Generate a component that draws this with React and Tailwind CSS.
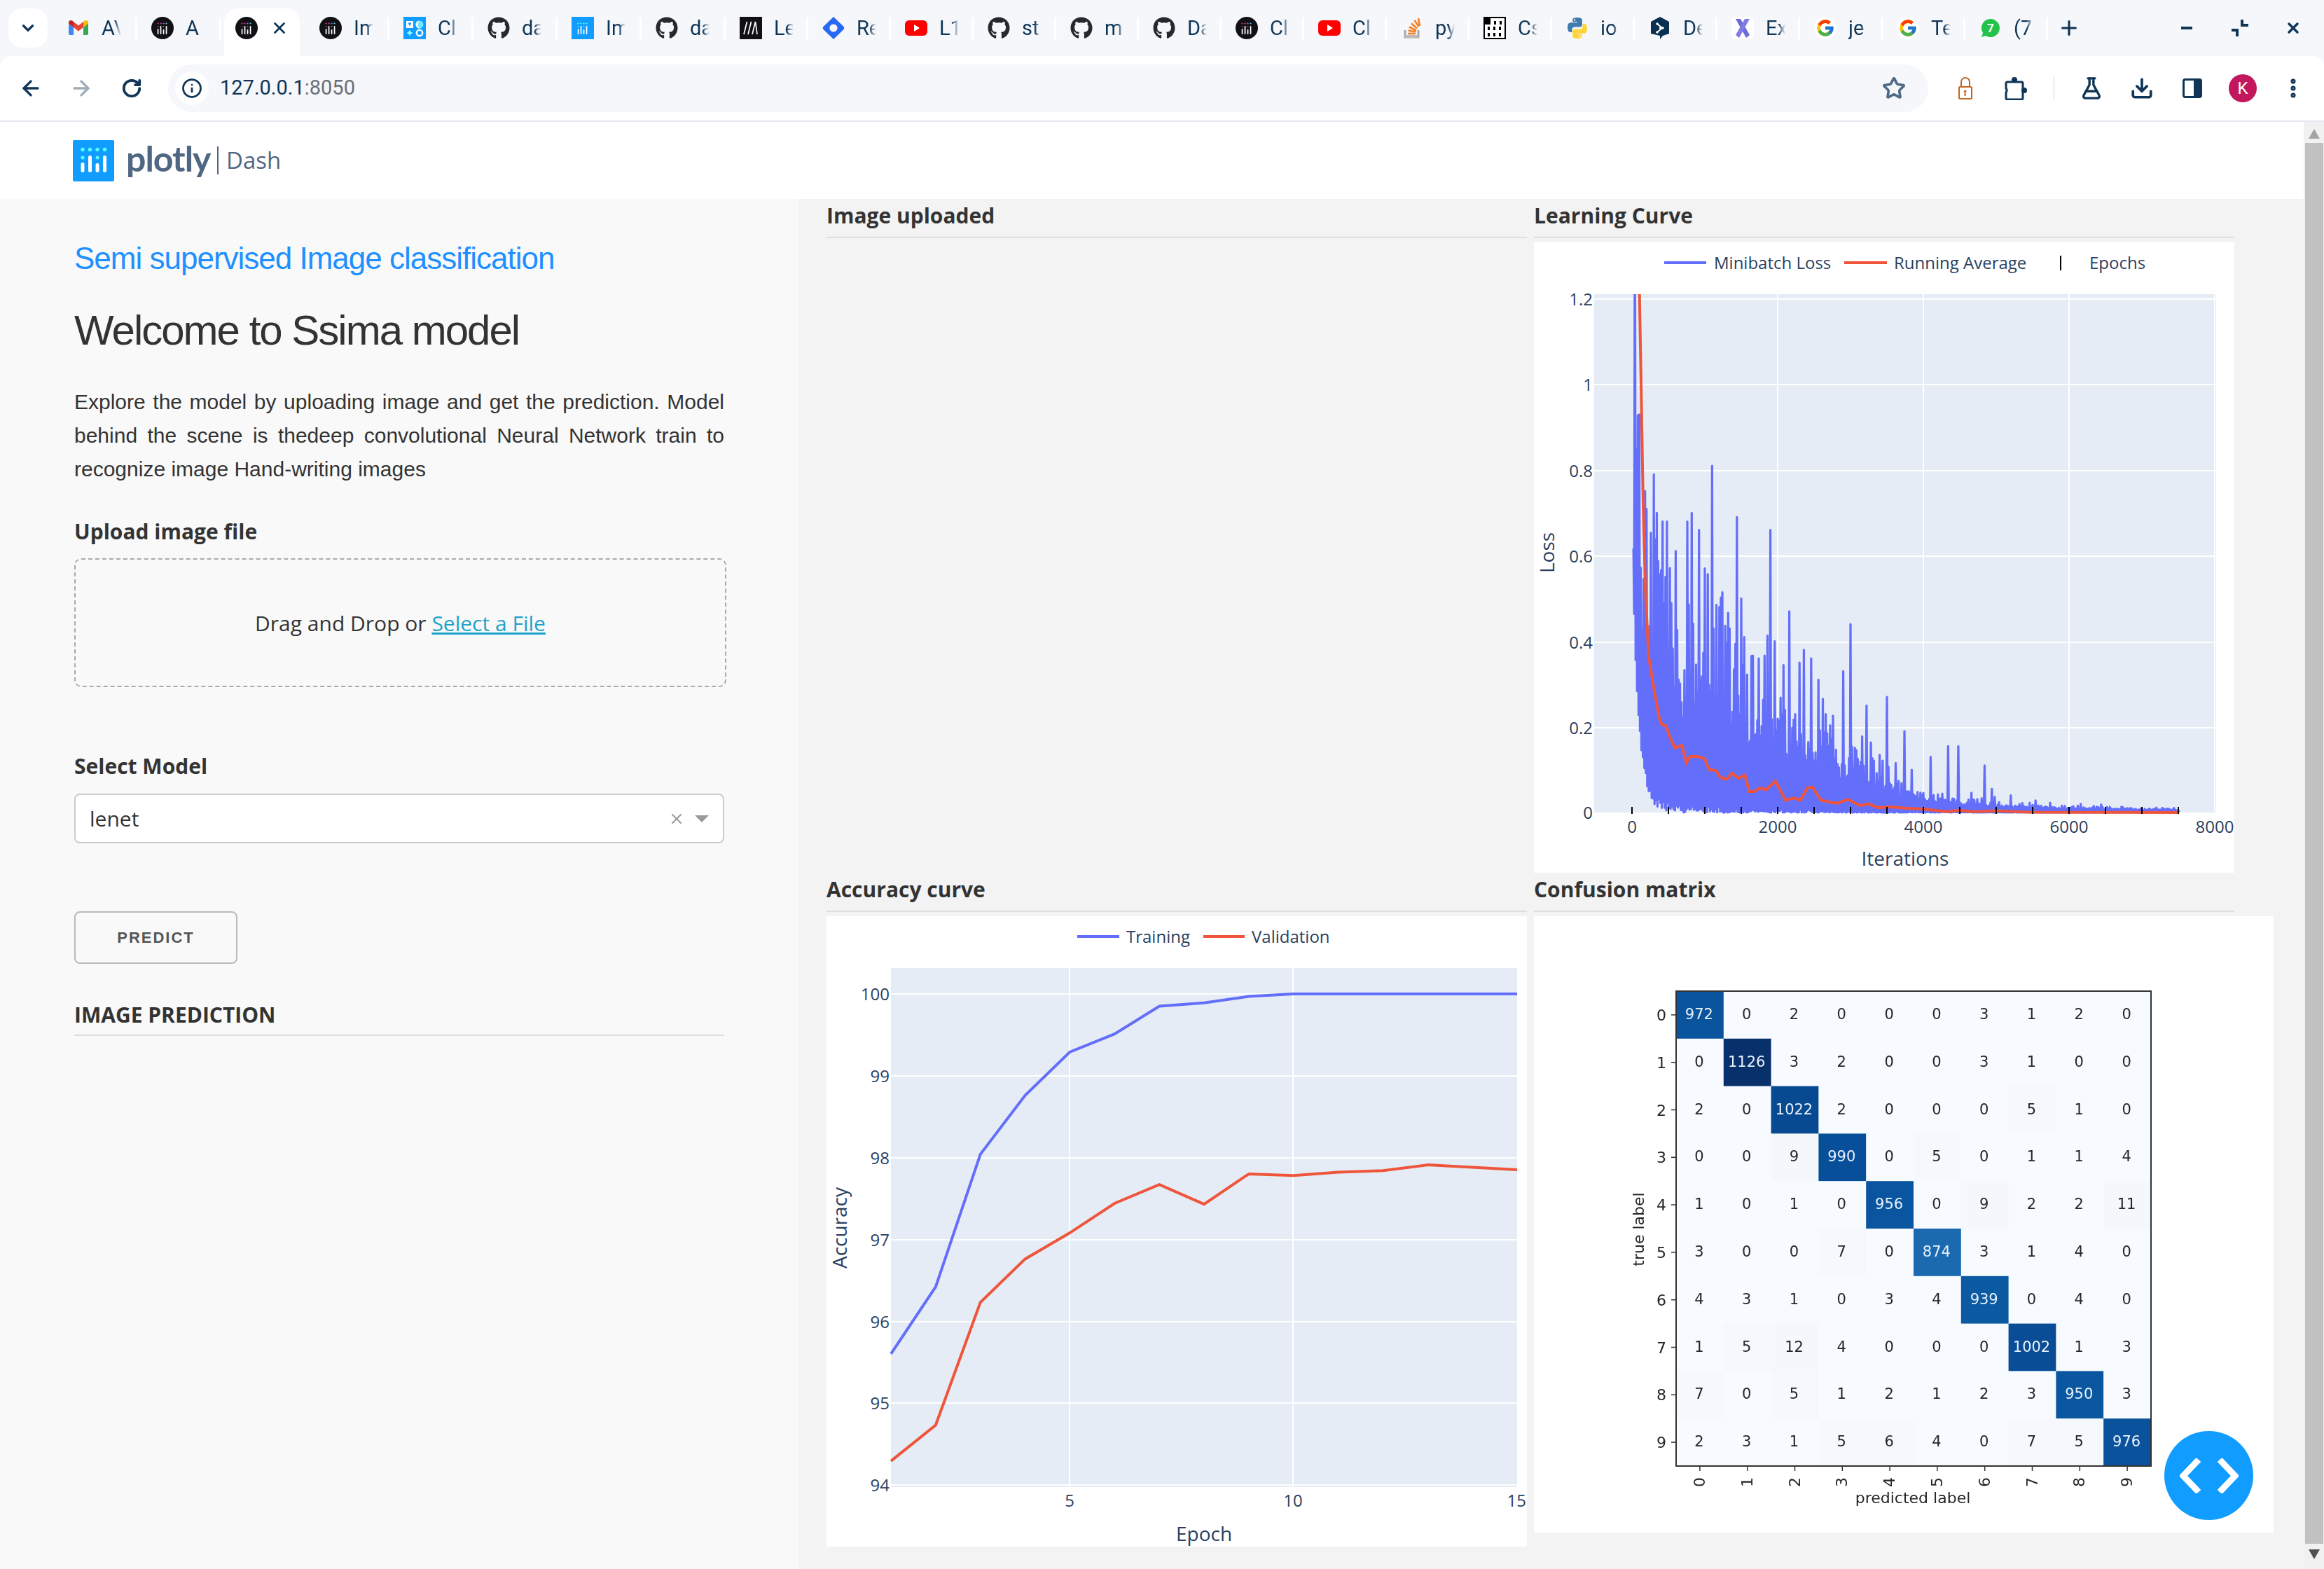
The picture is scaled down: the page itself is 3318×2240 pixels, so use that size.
import React from "react";
import { ArrowLeft, ArrowRight, RotateCw, Info, ChevronDown, X, Plus, Star, FlaskConical, Download, EllipsisVertical } from "lucide-react";
import { FaGithub } from "react-icons/fa";
import { FcGoogle } from "react-icons/fc";

const Gmail = () => (
  <svg viewBox="0 0 32 32" className="w-[32px] h-[32px]">
    <path d="M2 9v15a2 2 0 0 0 2 2h5V15z" fill="#4285f4" />
    <path d="M30 9v15a2 2 0 0 1-2 2h-5V15z" fill="#34a853" />
    <path d="M9 15V7l7 5.5L23 7v8l-7 5.5z" fill="#ea4335" />
    <path d="M2 9.5V8c0-2.5 3-4 5-2.5L9 7v8z" fill="#c5221f" />
    <path d="M30 9.5V8c0-2.5-3-4-5-2.5L23 7v8z" fill="#fbbc04" />
  </svg>
);
const DashBars = ({ dots, x = 0 }) => (
  <g>
    {[9.5, 13.5, 17.5, 21.5].map((c, i) => (
      <circle key={i} cx={c + x} cy="9.5" r="1.1" fill={dots[i]} />
    ))}
    <rect x="8.7" y="17" width="1.7" height="8" rx=".8" fill="#fff" />
    <rect x="8.7" y="13" width="1.7" height="1.7" rx=".8" fill={dots[0]} />
    <rect x="12.7" y="13" width="1.7" height="12" rx=".8" fill="#fff" />
    <rect x="16.7" y="18" width="1.7" height="7" rx=".8" fill="#fff" />
    <rect x="16.7" y="13" width="1.7" height="1.7" rx=".8" fill={dots[2]} />
    <rect x="20.7" y="13" width="1.7" height="12" rx=".8" fill="#fff" />
  </g>
);
const DashIcon = () => (
  <svg viewBox="0 0 32 32" className="w-[32px] h-[32px]">
    <circle cx="16" cy="16" r="16" fill="#111115" />
    <DashBars dots={["#e6336f", "#c04a9a", "#8a7fd0", "#5cc8e8"]} />
  </svg>
);
const PlotlySquare = () => (
  <svg viewBox="0 0 32 32" className="w-[32px] h-[32px]">
    <rect width="32" height="32" fill="#119dff" />
    <DashBars dots={["#5ff", "#5ff", "#5ff", "#5ff"]} />
  </svg>
);
const ChartIcon = () => (
  <svg viewBox="0 0 32 32" className="w-[32px] h-[32px]">
    <rect width="32" height="32" fill="#119dff" />
    <rect x="4" y="6" width="10" height="10" fill="#fff" />
    <path d="M6.5 8.5h5L9 13.5z" fill="#119dff" />
    <circle cx="23" cy="11" r="5.5" fill="#6fe8ff" />
    <path d="M23 5.5a5.5 5.5 0 0 0 0 11 7 7 0 0 1 0-11" fill="#fff" />
    <path d="M9 18.5l1.5 3 3 1.5-3 1.5-1.5 3-1.5-3-3-1.5 3-1.5z" fill="#8ff" />
    <circle cx="23" cy="23" r="4.2" fill="none" stroke="#fff" strokeWidth="2.4" />
  </svg>
);
const MIcon = () => (
  <svg viewBox="0 0 32 32" className="w-[32px] h-[32px]">
    <rect width="32" height="32" fill="#111115" />
    <path d="M6 25L10.500 7M12 25L16.500 7M18 25L22.500 7L25 25" fill="none" stroke="#fff" strokeWidth="1.7" />
  </svg>
);
const DiamondIcon = () => (
  <svg viewBox="0 0 32 32" className="w-[32px] h-[32px]">
    <path d="M16 0l14 13.500a3.500 3.500 0 0 1 0 5L16 32 2 18.500a3.500 3.500 0 0 1 0-5z" fill="#2768f5" />
    <circle cx="16" cy="16" r="5.6" fill="#f5f7fb" />
  </svg>
);
const YouTube = () => (
  <svg viewBox="0 0 32 32" className="w-[32px] h-[32px]">
    <rect x="0" y="5" width="32" height="22" rx="6" fill="#ff0000" />
    <path d="M13 11l8 5-8 5z" fill="#fff" />
  </svg>
);
const StackOverflow = () => (
  <svg viewBox="0 0 32 32" className="w-[32px] h-[32px]">
    <path d="M6 19v10h19V19" fill="none" stroke="#a9a9ab" strokeWidth="3" />
    <rect x="6" y="26" width="19" height="4" fill="#bcbbbb" />
    <path d="M10 24h11" stroke="#f48024" strokeWidth="2.6" />
    <path d="M10.500 19.500l11 2M12 14.500l10 5M15 9.500l8 7M19.500 5l6 9M25 2l2 11" stroke="#f48024" strokeWidth="2.6" fill="none" />
  </svg>
);
const Building = () => (
  <svg viewBox="0 0 32 32" className="w-[32px] h-[32px]">
    <rect width="32" height="32" fill="#000" />
    <path d="M10 2h20v28H2V11h8z" fill="#fff" />
    {[15, 23].map((x) => <rect key={x} x={x} y="6" width="3" height="5" />)}
    {[6, 14, 22].map((x) => <rect key={x} x={x} y="14" width="3" height="5" />)}
    {[6, 14, 22].map((x) => <rect key={x} x={x} y="23" width="3" height="5" />)}
  </svg>
);
const PythonIcon = () => {
  const d = "M15.900 1c-7 0-6.600 3-6.600 3v3.200h6.800v1H6.600S2 7.700 2 15s4 6.900 4 6.900h2.400v-3.300s-.1-4 3.900-4h6.800s3.800.1 3.800-3.700V4.800S23.500 1 15.900 1zm-3.800 2.200a1.200 1.200 0 1 1 0 2.400 1.200 1.200 0 0 1 0-2.400z";
  return (
    <svg viewBox="0 0 32 32" className="w-[32px] h-[32px]">
      <path d={d} fill="#3f7cad" />
      <path d={d} fill="#ffd43b" transform="rotate(180 16 16)" />
    </svg>
  );
};
const HexIcon = () => (
  <svg viewBox="0 0 32 32" className="w-[32px] h-[32px]">
    <path d="M16 0l13 7v17l-9 3-4 5v-5L3 24V7z" fill="#0b2f4e" />
    <path d="M12 10l7 6-7 6M19 16h-4" fill="none" stroke="#fff" strokeWidth="2" />
    <circle cx="12" cy="10" r="1.8" fill="#fff" />
    <circle cx="12" cy="22" r="1.8" fill="#fff" />
    <circle cx="20" cy="16" r="1.8" fill="#fff" />
  </svg>
);
const RibbonIcon = () => (
  <svg viewBox="0 0 32 32" className="w-[32px] h-[32px]">
    <rect width="32" height="32" rx="6" fill="#fff" />
    <path d="M6 3h7l13 23-5 4z" fill="#6c6bdc" />
    <path d="M26 3h-7L6 26l5 4z" fill="#7f7ce6" />
  </svg>
);
const GoogleIcon = () => (
  <div className="w-[32px] h-[32px] rounded-full bg-white flex items-center justify-center">
    <FcGoogle className="w-[28px] h-[28px]" />
  </div>
);
const WhatsIcon = () => (
  <svg viewBox="0 0 32 32" className="w-[32px] h-[32px]">
    <path d="M16 3a13 13 0 0 0-11 20l-2 6 6-2A13 13 0 1 0 16 3z" fill="#25c24a" />
    <text x="16" y="22" textAnchor="middle" className="fill-white font-['Roboto',sans-serif] text-[17px] font-bold">7</text>
  </svg>
);
const GitHub = () => <FaGithub className="w-[32px] h-[32px] text-[#24292e]" />;

const tabs = [
  [Gmail, "AV", 120], [DashIcon, "A", 120], [DashIcon, "", 120, true], [DashIcon, "Im", 120], [ChartIcon, "Cl", 120],
  [GitHub, "da", 120], [PlotlySquare, "Im", 120], [GitHub, "da", 120], [MIcon, "Le", 118], [DiamondIcon, "Re", 118],
  [YouTube, "L1", 118], [GitHub, "st", 118], [GitHub, "m", 118], [GitHub, "Da", 118], [DashIcon, "Cl", 118],
  [YouTube, "Cl", 118], [StackOverflow, "py", 118], [Building, "Cs", 118], [PythonIcon, "io", 118], [HexIcon, "De", 118],
  [RibbonIcon, "Ex", 118], [GoogleIcon, "je", 118], [GoogleIcon, "Te", 118], [WhatsIcon, "(7", 118],
];

function Tab({ Icon, label, width, active }) {
  return (
    <div style={{ width }} className="h-[80px] flex items-center shrink-0 relative">
      {active && <div className="absolute left-[6px] right-[6px] top-[12px] bottom-0 bg-white rounded-t-[20px]" />}
      <div className="relative ml-[22px] w-[32px] h-[32px] shrink-0 flex items-center justify-center"><Icon /></div>
      {active ? (
        <X className="relative ml-[18px] w-[26px] h-[26px] text-[#0f3557]" strokeWidth={2.6} />
      ) : (
        <span className="ml-[17px] w-[28px] overflow-hidden whitespace-nowrap text-[29px] leading-[36px] text-[#0f3557] font-['Roboto',sans-serif] [mask-image:linear-gradient(to_right,black_65%,transparent)]">{label}</span>
      )}
      {!active && <div className="absolute right-[-2px] top-[25px] w-[3px] h-[32px] bg-white" />}
    </div>
  );
}

function TabStrip() {
  return (
    <div className="h-[80px] bg-[#f5f7fb] flex items-center">
      <div className="w-[12px]" />
      <div className="w-[56px] h-[56px] bg-white rounded-[20px] flex items-center justify-center">
        <ChevronDown className="w-[26px] h-[26px] text-[#0f3557]" strokeWidth={3} />
      </div>
      <div className="w-[6px]" />
      {tabs.map(([I, l, w, a], i) => <Tab key={i} Icon={I} label={l} width={w} active={a} />)}
      <div className="w-[64px] flex justify-center"><Plus className="w-[32px] h-[32px] text-[#0f3557]" strokeWidth={2.4} /></div>
      <div className="ml-auto flex items-center mr-[6px]">
        <div className="w-[76px] flex justify-center"><div className="w-[16px] h-[4px] bg-[#0f3557]" /></div>
        <div className="w-[76px] flex justify-center">
          <svg viewBox="0 0 24 24" className="w-[24px] h-[24px]"><path d="M0 15h8v9M15 0v8h9" fill="none" stroke="#0f3557" strokeWidth="4" /></svg>
        </div>
        <div className="w-[76px] flex justify-center"><X className="w-[24px] h-[24px] text-[#0f3557]" strokeWidth={3.4} /></div>
      </div>
    </div>
  );
}

const ToolBtn = ({ children }) => <div className="w-[72px] flex items-center justify-center shrink-0">{children}</div>;

function Toolbar() {
  const c = "w-[34px] h-[34px] text-[#0f3557]";
  return (
    <div className="bg-[#f5f7fb]">
      <div className="h-[94px] bg-white rounded-t-[16px] border-b-2 border-[#e2e8ee] flex items-center pl-[8px]">
        <ToolBtn><ArrowLeft className={c} strokeWidth={2.4} /></ToolBtn>
        <ToolBtn><ArrowRight className="w-[34px] h-[34px] text-[#9fadb9]" strokeWidth={2.4} /></ToolBtn>
        <ToolBtn><RotateCw className="w-[30px] h-[30px] text-[#0f3557]" strokeWidth={3} /></ToolBtn>
        <div className="ml-[16px] w-[2513px] h-[68px] rounded-full bg-[#f5f7fb] flex items-center pl-[10px] pr-[32px]">
          <div className="w-[48px] h-[48px] rounded-full bg-white flex items-center justify-center">
            <Info className="w-[30px] h-[30px] text-[#0f3557]" strokeWidth={2.2} />
          </div>
          <span className="ml-[16px] text-[29px] font-['Roboto',sans-serif] text-[#0f3557]">127.0.0.1<span className="text-[#6a6f75]">:8050</span></span>
          <Star className="ml-auto w-[34px] h-[34px] text-[#4f6a86]" strokeWidth={2.6} />
        </div>
        <div className="w-[17px]" />
        <ToolBtn>
          <svg viewBox="0 0 24 34" className="w-[24px] h-[34px]">
            <path d="M6 15V8a6 6 0 0 1 12 0v7" fill="none" stroke="#c3651e" strokeWidth="2" />
            <rect x="3" y="15" width="18" height="17" rx="1.500" fill="none" stroke="#c3651e" strokeWidth="2" />
            <path d="M10.500 20h3v2h-1v6h-2v-6h-1z" fill="#c3651e" />
          </svg>
        </ToolBtn>
        <ToolBtn>
          <svg viewBox="0 0 32 34" className="w-[32px] h-[34px]">
            <path d="M4 8h20a2 2 0 0 1 2 2v21a2 2 0 0 1-2 2H4a2 2 0 0 1-2-2v-8a5 5 0 0 0 0-6V10a2 2 0 0 1 2-2z" fill="none" stroke="#0f3557" strokeWidth="3" />
            <circle cx="14" cy="5" r="4" fill="#0f3557" />
            <circle cx="28" cy="20" r="4" fill="#0f3557" />
          </svg>
        </ToolBtn>
        <div className="w-[36px] flex justify-center"><div className="w-[3px] h-[32px] bg-[#f0f3f7]" /></div>
        <ToolBtn><FlaskConical className={c} strokeWidth={2.4} /></ToolBtn>
        <ToolBtn><Download className={c} strokeWidth={2.6} /></ToolBtn>
        <ToolBtn>
          <svg viewBox="0 0 28 28" className="w-[28px] h-[28px]"><rect x="1.500" y="1.500" width="25" height="25" rx="2.500" fill="none" stroke="#0f3557" strokeWidth="3" /><rect x="16" y="2" width="10" height="24" fill="#0f3557" /></svg>
        </ToolBtn>
        <ToolBtn>
          <div className="w-[40px] h-[40px] rounded-full bg-[#c2185b] flex items-center justify-center text-white text-[24px] font-['Roboto',sans-serif]">K</div>
        </ToolBtn>
        <ToolBtn><EllipsisVertical className={c} strokeWidth={3} /></ToolBtn>
      </div>
    </div>
  );
}

function NavBar() {
  return (
    <div className="h-[110px] bg-white flex items-center pl-[104px]">
      <svg viewBox="0 0 59 59" className="w-[59px] h-[59px] shrink-0">
        <rect width="59" height="59" rx="2" fill="#119dff" />
        {[14, 24.5, 35, 45.5].map((x) => <circle key={x} cx={x} cy="13.500" r="2.700" fill="#5ff" />)}
        <circle cx="14" cy="25" r="2.500" fill="#5ff" />
        <circle cx="35" cy="25" r="2.500" fill="#5ff" />
        {[[14, 32, 14], [24.5, 22, 24], [35, 33, 13], [45.5, 22, 24]].map(([x, y, h]) => <rect key={x} x={x - 2.5} y={y} width="5" height={h} rx="2.500" fill="#fff" />)}
      </svg>
      <span className="ml-[17px] w-[118px] text-[50px] leading-[60px] font-bold text-[#506784] font-['Lato',sans-serif] -mt-[6px] tracking-[-1px]">plotly</span>
      <div className="ml-[12px] w-[2px] h-[40px] bg-[#506784]" />
      <span className="ml-[11px] text-[33px] leading-[44px] text-[#506784] font-['Open_Sans',sans-serif]">Dash</span>
    </div>
  );
}

function Sidebar() {
  const label = "text-[30px] leading-[44px] font-bold text-[#333] font-['Open_Sans',sans-serif]";
  return (
    <aside className="w-[1140px] shrink-0 bg-[#f9f9f9] pl-[106px] pr-[106px]">
      <h2 className="mt-[55px] text-[44px] leading-[60px] text-[#1e90ff] tracking-[-1px] font-['Liberation_Sans',sans-serif]">Semi supervised Image classification</h2>
      <h1 className="mt-[33px] text-[60px] leading-[80px] text-[#333] tracking-[-2px] font-['Liberation_Sans',sans-serif]">Welcome to Ssima model</h1>
      <p className="mt-[38px] text-[30px] leading-[48px] text-[#333] text-justify font-['Liberation_Sans',sans-serif]">Explore the model by uploading image and get the prediction. Model behind the scene is thedeep convolutional Neural Network train to recognize image Hand-writing images</p>
      <div className={`mt-[43px] ${label}`}>Upload image file</div>
      <div className="mt-[16px] h-[184px] w-[931px] border-2 border-dashed border-[#aaa] rounded-[10px] flex items-center justify-center text-[30px] text-[#333] font-['Open_Sans',sans-serif]">
        <span>Drag and Drop or <a className="text-[#1ca3c9] underline">Select a File</a></span>
      </div>
      <div className={`mt-[91px] ${label}`}>Select Model</div>
      <div className="mt-[17px] h-[71px] bg-white border-2 border-[#ccc] rounded-[8px] flex items-center pl-[20px] text-[30px] text-[#333] font-['Open_Sans',sans-serif]">
        lenet
        <X className="ml-auto w-[24px] h-[24px] text-[#999]" strokeWidth={2} />
        <svg viewBox="0 0 20 10" className="ml-[14px] mr-[20px] w-[20px] h-[10px]"><path d="M0 0h20L10 10z" fill="#999" /></svg>
      </div>
      <button className="mt-[97px] block w-[233px] h-[75px] border-2 border-[#bbb] rounded-[8px] text-[22px] font-bold tracking-[2px] text-[#555] font-['Liberation_Sans',sans-serif]">PREDICT</button>
      <div className={`mt-[51px] pb-[6px] border-b-2 border-[#ddd] ${label}`}>IMAGE PREDICTION</div>
    </aside>
  );
}

function mulberry(a) {
  return () => {
    a |= 0; a = (a + 0x6d2b79f5) | 0;
    let t = Math.imul(a ^ (a >>> 15), 1 | a);
    t = (t + Math.imul(t ^ (t >>> 7), 61 | t)) ^ t;
    return ((t ^ (t >>> 14)) >>> 0) / 4294967296;
  };
}
const envKnots = [[0, 1.3], [100, .75], [300, .6], [600, .46], [1000, .38], [1500, .3], [2000, .24], [2500, .18], [3000, .13], [3500, .08], [4000, .05], [4500, .03], [5000, .022], [6000, .014], [7500, .008]];
const env = (x) => {
  for (let i = 1; i < envKnots.length; i++) {
    if (x <= envKnots[i][0]) {
      const [a, b] = envKnots[i - 1], [c, d] = envKnots[i];
      return b + ((d - b) * (x - a)) / (c - a);
    }
  }
  return 0.005;
};
const spikes = { 30: 1.5, 60: .85, 100: .93, 288: .79, 325: .7, 407: .68, 476: .68, 751: .68, 807: .7, 901: .66, 983: .57, 1083: .81, 1183: .48, 1327: .43, 1433: .69, 1496: .5, 1728: .36, 1890: .66, 1959: .4, 2147: .47, 2297: .35, 2354: .38, 2460: .36, 2560: .31, 2654: .23, 2885: .33, 2992: .44, 3211: .25, 3487: .27, 3725: .19, 4094: .13, 4325: .155, 4470: .155, 4826: .11, 4940: .055, 5190: .04 };
const spikeKeys = Object.keys(spikes).map(Number);
const lx = (i) => 140 + i * 0.104;
const ly = (v) => 814 - v * 611;
function miniPath() {
  const r = mulberry(7);
  const pts = [];
  for (let i = 20; i <= 7500; i += 20) {
    const e = env(i);
    const t = r();
    let hi = e * (0.5 + 0.95 * t * t * t + 0.3 * r());
    const s = spikeKeys.find((k) => k > i - 20 && k <= i);
    if (s !== undefined) hi = spikes[s];
    const low = 0.55 * Math.exp(-i / 90) + r() * r() * 0.035 * Math.exp(-i / 1500);
    pts.push(`${lx(i).toFixed(1)},${ly(hi).toFixed(1)}`);
    pts.push(`${lx(i + 10).toFixed(1)},${ly(low).toFixed(1)}`);
  }
  return pts.join(" ");
}
const MINI = miniPath();
const avg = [[247, 224], [250, 400], [255, 700], [260, 900], [267, 1050], [277, 1115], [283, 1150], [290, 1190], [296, 1207], [305, 1210], [315, 1240], [325, 1260], [340, 1255], [350, 1295], [358, 1280], [375, 1280], [390, 1285], [400, 1310], [415, 1312], [425, 1328], [438, 1332], [450, 1318], [465, 1330], [478, 1322], [488, 1360], [500, 1360], [510, 1352], [525, 1356], [545, 1336], [555, 1355], [567, 1380], [585, 1375], [600, 1380], [615, 1352], [627, 1350], [645, 1380], [680, 1387], [705, 1378], [730, 1392], [750, 1388], [770, 1397], [800, 1395], [830, 1398], [870, 1400], [920, 1406], [950, 1403], [980, 1406], [1030, 1404], [1100, 1407], [1430, 1408]]
  .map(([x, y]) => `${(x / 1.537 - 10).toFixed(1)},${(y / 1.6 - 66).toFixed(1)}`).join(" ");

const tick = "fill-[#2a3f5f] font-['Open_Sans',sans-serif] text-[24px]";
const axis = "fill-[#2a3f5f] font-['Open_Sans',sans-serif] text-[28px]";

function LearningCurve() {
  return (
    <svg viewBox="0 0 1000 900" className="w-[1000px] h-[900px] bg-white block">
      <defs><clipPath id="lc"><rect x="86" y="74" width="888" height="742" /></clipPath></defs>
      <rect x="86" y="74" width="888" height="740" fill="#e5ecf6" />
      {[81, 203, 326, 448, 571, 693].map((y) => <line key={y} x1="86" x2="974" y1={y} y2={y} stroke="#fff" strokeWidth="2" />)}
      {[348, 556, 764, 972].map((x) => <line key={x} x1={x} x2={x} y1="74" y2="814" stroke="#fff" strokeWidth="2" />)}
      <g clipPath="url(#lc)">
        <polyline points={MINI} fill="none" stroke="#636efa" strokeWidth="3.2" strokeLinejoin="round" />
        <polyline points={avg} fill="none" stroke="#ef553b" strokeWidth="4" />
      </g>
      {Array.from({ length: 16 }, (_, i) => lx(i * 500)).map((x) => <line key={x} x1={x} x2={x} y1="806" y2="816" stroke="#000" strokeWidth="2" />)}
      {[["1.2", 81], ["1", 203], ["0.8", 326], ["0.6", 448], ["0.4", 571], ["0.2", 693], ["0", 814]].map(([t, y]) => <text key={t} x="84" y={y + 9} textAnchor="end" className={tick}>{t}</text>)}
      {[["0", 140], ["2000", 348], ["4000", 556], ["6000", 764], ["8000", 972]].map(([t, x]) => <text key={t} x={x} y="843" textAnchor="middle" className={tick}>{t}</text>)}
      <text x="530" y="890" textAnchor="middle" className={axis}>Iterations</text>
      <text transform="translate(29 443) rotate(-90)" textAnchor="middle" className={axis}>Loss</text>
      <line x1="186" x2="246" y1="29" y2="29" stroke="#636efa" strokeWidth="4" />
      <text x="257" y="38" className={tick}>Minibatch Loss</text>
      <line x1="443" x2="504" y1="29" y2="29" stroke="#ef553b" strokeWidth="4" />
      <text x="514" y="38" className={tick}>Running Average</text>
      <line x1="752" x2="752" y1="19" y2="40" stroke="#000" strokeWidth="2" />
      <text x="793" y="38" className={tick}>Epochs</text>
    </svg>
  );
}

const train = [95.6, 96.42, 98.04, 98.76, 99.29, 99.51, 99.85, 99.89, 99.97, 100, 100, 100, 100, 100, 100];
const valid = [94.29, 94.73, 96.23, 96.76, 97.08, 97.44, 97.67, 97.43, 97.8, 97.78, 97.82, 97.84, 97.91, 97.88, 97.85];
const acc = (arr) => arr.map((v, i) => `${(92 + i * 63.86).toFixed(1)},${(111 + (100 - v) * 116.8).toFixed(1)}`).join(" ");

function AccuracyCurve() {
  return (
    <svg viewBox="0 0 1000 900" className="w-[1000px] h-[900px] bg-white block">
      <rect x="92" y="74" width="894" height="741" fill="#e5ecf6" />
      {[111, 228, 345, 462, 579, 695, 812].map((y) => <line key={y} x1="92" x2="986" y1={y} y2={y} stroke="#fff" strokeWidth="2" />)}
      {[347, 666].map((x) => <line key={x} x1={x} x2={x} y1="74" y2="815" stroke="#fff" strokeWidth="2" />)}
      <polyline points={acc(train)} fill="none" stroke="#636efa" strokeWidth="4" />
      <polyline points={acc(valid)} fill="none" stroke="#ef553b" strokeWidth="4" />
      {[["100", 111], ["99", 228], ["98", 345], ["97", 462], ["96", 579], ["95", 695], ["94", 812]].map(([t, y]) => <text key={t} x="90" y={y + 9} textAnchor="end" className={tick}>{t}</text>)}
      {[["5", 347], ["10", 666], ["15", 986]].map(([t, x]) => <text key={t} x={x} y="843" textAnchor={t === "15" ? "end" : "middle"} dx={t === "15" ? 13 : 0} className={tick}>{t}</text>)}
      <text x="539" y="892" textAnchor="middle" className={axis}>Epoch</text>
      <text transform="translate(29 445) rotate(-90)" textAnchor="middle" className={axis}>Accuracy</text>
      <line x1="358" x2="418" y1="29" y2="29" stroke="#636efa" strokeWidth="4" />
      <text x="428" y="38" className={tick}>Training</text>
      <line x1="538" x2="597" y1="29" y2="29" stroke="#ef553b" strokeWidth="4" />
      <text x="607" y="38" className={tick}>Validation</text>
    </svg>
  );
}

const matrix = [
  [972, 0, 2, 0, 0, 0, 3, 1, 2, 0],
  [0, 1126, 3, 2, 0, 0, 3, 1, 0, 0],
  [2, 0, 1022, 2, 0, 0, 0, 5, 1, 0],
  [0, 0, 9, 990, 0, 5, 0, 1, 1, 4],
  [1, 0, 1, 0, 956, 0, 9, 2, 2, 11],
  [3, 0, 0, 7, 0, 874, 3, 1, 4, 0],
  [4, 3, 1, 0, 3, 4, 939, 0, 4, 0],
  [1, 5, 12, 4, 0, 0, 0, 1002, 1, 3],
  [7, 0, 5, 1, 2, 1, 2, 3, 950, 3],
  [2, 3, 1, 5, 6, 4, 0, 7, 5, 976],
];
const diag = { 972: "#0a549e", 1126: "#08306b", 1022: "#084a91", 990: "#084f99", 956: "#0a559f", 874: "#1b69af", 939: "#0b5aa2", 1002: "#084d96", 950: "#0a57a0", 976: "#0a529c" };
const cellFill = (v) => diag[v] || (v >= 9 ? "#f4f8fd" : v >= 5 ? "#f5f9fe" : "#f7fbff");
const mx = 203, my = 107, cs = 67.8;
const cmText = "font-['DejaVu_Sans',sans-serif] text-[21px]";
const cmLabel = "font-['DejaVu_Sans',sans-serif] text-[22px]";

function Confusion() {
  return (
    <svg viewBox="0 0 1056 880" className="w-[1056px] h-[880px] bg-white block">
      <g className="blur-[0.7px]">
        {matrix.map((row, r) => row.map((v, c) => (
          <g key={`${r}-${c}`}>
            <rect x={mx + c * cs} y={my + r * cs} width={cs + .5} height={cs + .5} fill={cellFill(v)} />
            <text x={mx + c * cs + cs / 2 - 1} y={my + r * cs + cs / 2 + 6} textAnchor="middle" className={`${cmText} ${v > 800 ? "fill-[#e8f1fa]" : "fill-[#262626]"}`}>{v}</text>
          </g>
        )))}
        <rect x={mx} y={my} width={cs * 10} height={cs * 10} fill="none" stroke="#333" strokeWidth="2" />
        {matrix.map((_, i) => (
          <g key={i}>
            <line x1={mx - 7} x2={mx} y1={my + i * cs + cs / 2} y2={my + i * cs + cs / 2} stroke="#333" strokeWidth="1.5" />
            <text x={mx - 14} y={my + i * cs + cs / 2 + 8} textAnchor="end" className={`${cmLabel} fill-[#262626]`}>{i}</text>
            <line x1={mx + i * cs + cs / 2} x2={mx + i * cs + cs / 2} y1={my + cs * 10} y2={my + cs * 10 + 7} stroke="#333" strokeWidth="1.5" />
            <text transform={`translate(${mx + i * cs + cs / 2 + 7} 808) rotate(-90)`} textAnchor="middle" className={`${cmLabel} fill-[#262626]`}>{i}</text>
          </g>
        ))}
        <text x="541" y="838" textAnchor="middle" className={`${cmLabel} fill-[#262626]`}>predicted label</text>
        <text transform="translate(157 447) rotate(-90)" textAnchor="middle" className={`${cmLabel} fill-[#262626]`}>true label</text>
      </g>
    </svg>
  );
}

function Panel({ title, children, wide }) {
  return (
    <div className="w-[1000px] h-[962px]">
      <h3 className="h-[56px] pt-[2px] border-b-2 border-[#ddd] text-[30px] leading-[44px] font-bold text-[#333] font-['Open_Sans',sans-serif]">{title}</h3>
      <div className={`mt-[6px] ${wide ? "w-[1056px]" : ""}`}>{children}</div>
    </div>
  );
}

export default function App() {
  return (
    <div className="w-[3318px] h-[2240px] overflow-hidden relative bg-white">
      <TabStrip />
      <Toolbar />
      <div className="flex h-[2066px]">
        <div className="flex-1 min-w-0 flex flex-col">
          <NavBar />
          <div className="flex flex-1 min-h-0">
            <Sidebar />
            <main className="flex-1 bg-[#f3f3f3] pl-[40px]">
              <div className="grid grid-cols-[1000px_1000px] gap-x-[10px]">
                <Panel title="Image uploaded" />
                <Panel title="Learning Curve"><LearningCurve /></Panel>
                <Panel title="Accuracy curve"><AccuracyCurve /></Panel>
                <Panel title="Confusion matrix" wide><Confusion /></Panel>
              </div>
            </main>
          </div>
        </div>
        <div className="w-[29px] shrink-0 bg-[#f1f1f1] flex flex-col items-center">
          <svg viewBox="0 0 16 14" className="w-[16px] h-[14px] mt-[10px]"><path d="M8 0l8 14H0z" fill="#a3a3a3" /></svg>
          <div className="mt-[6px] w-[26px] h-[2000px] bg-[#c1c1c1]" />
          <svg viewBox="0 0 16 14" className="w-[16px] h-[14px] mt-[8px]"><path d="M8 14l8-14H0z" fill="#505050" /></svg>
        </div>
      </div>
      <div className="absolute left-[3090px] top-[2043px] w-[127px] h-[127px] rounded-full bg-[#119dff] flex items-center justify-center">
        <svg viewBox="0 0 84 50" className="w-[84px] h-[50px]"><path d="M27 2L5 25l22 23M57 2l22 23-22 23" fill="none" stroke="#fff" strokeWidth="9" /></svg>
      </div>
    </div>
  );
}
